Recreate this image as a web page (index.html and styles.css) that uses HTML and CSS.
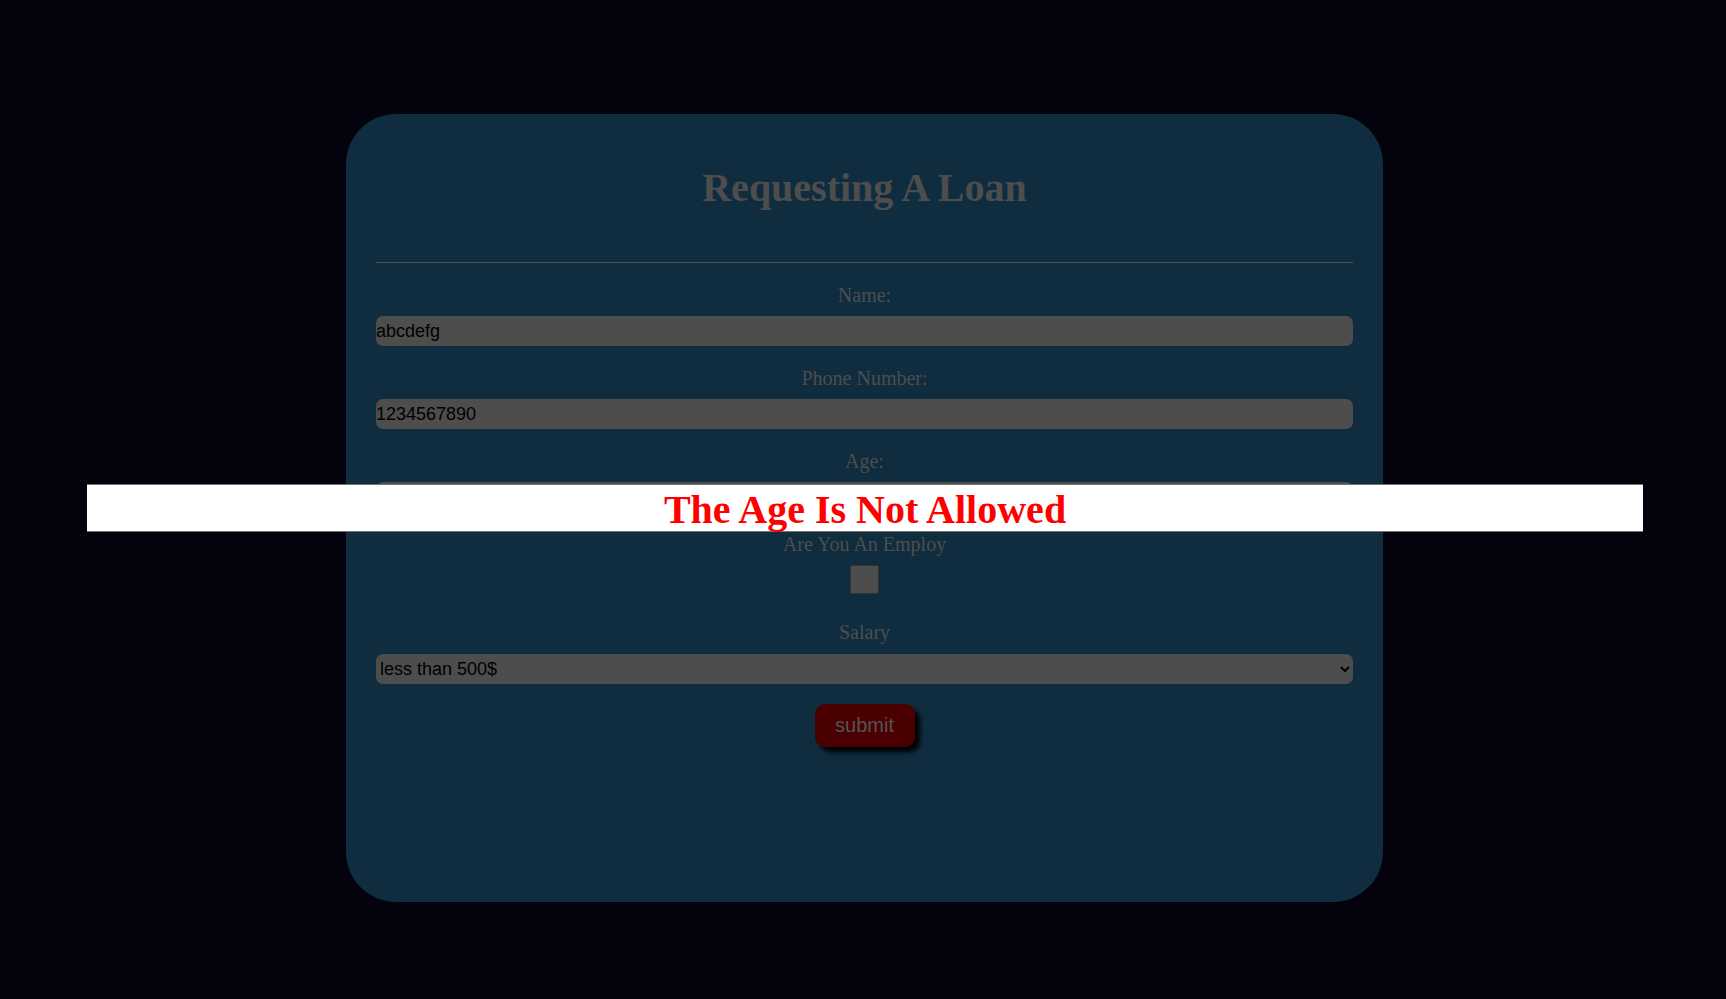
FILE: index.html
```html
<!DOCTYPE html>
<html lang="en">
<head>
<meta charset="utf-8">
<title>Requesting A Loan</title>
<link rel="stylesheet" href="styles.css">
</head>
<body>
<main class="page">
  <form class="card">
    <h1 class="title">Requesting A Loan</h1>
    <hr class="rule">
    <label class="label" for="name">Name:</label>
    <input class="field" id="name" type="text" value="abcdefg">
    <label class="label" for="phone">Phone Number:</label>
    <input class="field" id="phone" type="text" value="1234567890">
    <label class="label" for="age">Age:</label>
    <input class="field" id="age" type="text" value="">
    <label class="label label-check" for="employ">Are You An Employ</label>
    <input class="check" id="employ" type="checkbox">
    <label class="label label-salary" for="salary">Salary</label>
    <select class="select" id="salary">
      <option>less than 500$</option>
      <option>between 500$ and 2000$</option>
      <option>more than 2000$</option>
    </select>
    <button class="submit" type="button">submit</button>
  </form>
</main>
<div class="alert">The Age Is Not Allowed</div>
</body>
</html>
```

FILE: styles.css
```css
* { box-sizing: border-box; }

html, body {
  margin: 0;
  padding: 0;
  height: 100%;
}

body {
  background: #03020d;
  font-family: "Liberation Serif", "Times New Roman", serif;
}

.page {
  display: flex;
  justify-content: center;
  padding-top: 114px;
}

.card {
  width: 1037px;
  height: 788px;
  margin-left: 3px;
  background: #0f2d3f;
  border-radius: 50px;
  padding: 30px 30px;
  display: flex;
  flex-direction: column;
  align-items: stretch;
}

.title {
  margin: 22px 0 0;
  font-size: 40px;
  line-height: 44px;
  font-weight: bold;
  text-align: center;
  color: #4d4d4d;
}

.rule {
  margin: 52px 0 0;
  border: 0;
  border-top: 1px solid #55524d;
  height: 0;
}

.label {
  display: block;
  margin-top: 21px;
  font-size: 20px;
  line-height: 23px;
  text-align: center;
  color: #4d4d4d;
}

.field {
  display: block;
  width: 100%;
  height: 30px;
  margin: 9px 0 0;
  padding: 0;
  border: 0;
  border-radius: 7px;
  background: #4d4d4d;
  color: #000;
  font-family: "Liberation Sans", Arial, sans-serif;
  font-size: 18px;
  outline: none;
}

.label-check { margin-top: 21px; }

.check {
  appearance: none;
  -webkit-appearance: none;
  align-self: center;
  width: 29px;
  height: 29px;
  margin: 9px 0 0;
  background: #4d4d4d;
  border: 1px solid #333;
  border-radius: 2px;
}

.label-salary { margin-top: 27px; }

.select {
  display: block;
  width: 100%;
  height: 30px;
  margin: 10px 0 0;
  padding: 0;
  border: 0;
  border-radius: 7px;
  background-color: #4d4d4d;
  color: #000;
  font-family: "Liberation Sans", Arial, sans-serif;
  font-size: 18px;
  outline: none;
}

.submit {
  align-self: center;
  width: 100px;
  height: 43px;
  margin: 20px 0 0;
  border: 0;
  border-radius: 10px;
  background: #4a0000;
  color: #555;
  font-family: "Liberation Sans", Arial, sans-serif;
  font-size: 20px;
  box-shadow: 5px 5px 5px #000;
}

.alert {
  position: absolute;
  top: 484px;
  left: 87px;
  width: 1556px;
  height: 48px;
  padding-top: 3px;
  background: #fff;
  border-top: 1px solid #777;
  border-bottom: 1px solid #777;
  color: #f00;
  font-family: "Liberation Serif", "Times New Roman", serif;
  font-weight: bold;
  font-size: 40px;
  line-height: 44px;
  text-align: center;
}
```
